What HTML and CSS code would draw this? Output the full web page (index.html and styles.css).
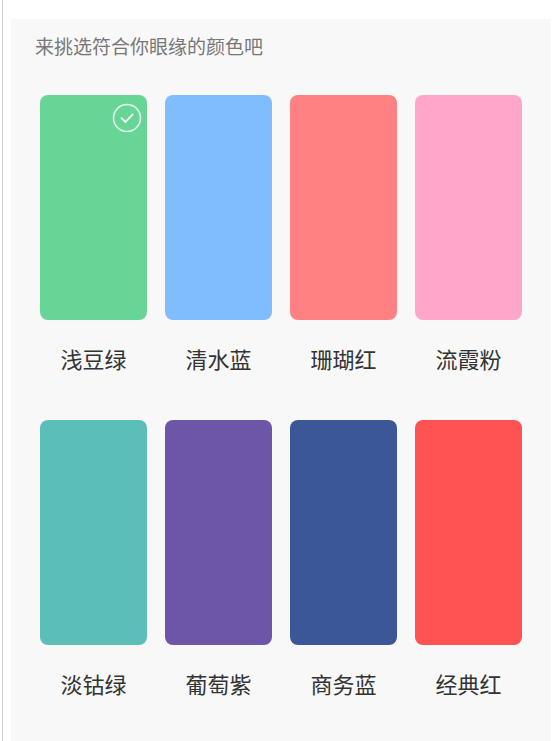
FILE: index.html
```html
<!DOCTYPE html>
<html lang="zh-CN">
<head>
  <meta charset="UTF-8" />
  <meta name="viewport" content="width=device-width, initial-scale=1.0">
  <title>主题色</title>
  <link rel="stylesheet" href="styles.css">
</head>

<body>
  <div class="frame">
    <div class="panel">
      <p class="title">来挑选符合你眼缘的颜色吧</p>

      <div class="swatches">
        <div class="swatch">
          <div class="color green">
            <svg class="check" viewBox="0 0 30 30" width="30" height="30">
              <circle cx="15" cy="15" r="13.5" fill="none" stroke="rgba(255,255,255,0.85)" stroke-width="1.6"/>
              <path d="M9.5 15.2 L13.4 19 L20.8 11.4" fill="none" stroke="rgba(255,255,255,0.9)" stroke-width="1.8" stroke-linecap="round" stroke-linejoin="round"/>
            </svg>
          </div>
          <div class="name">浅豆绿</div>
        </div>
        <div class="swatch">
          <div class="color blue"></div>
          <div class="name">清水蓝</div>
        </div>
        <div class="swatch">
          <div class="color coral"></div>
          <div class="name">珊瑚红</div>
        </div>
        <div class="swatch">
          <div class="color pink"></div>
          <div class="name">流霞粉</div>
        </div>
        <div class="swatch">
          <div class="color teal"></div>
          <div class="name">淡钴绿</div>
        </div>
        <div class="swatch">
          <div class="color purple"></div>
          <div class="name">葡萄紫</div>
        </div>
        <div class="swatch">
          <div class="color navy"></div>
          <div class="name">商务蓝</div>
        </div>
        <div class="swatch">
          <div class="color red"></div>
          <div class="name">经典红</div>
        </div>
      </div>
    </div>
  </div>
</body>
</html>
```

FILE: styles.css
```css
body {
  background-color: white;
  margin: 0;
  padding: 0;
  font-family: "Noto Sans CJK SC", "Noto Sans", sans-serif;
}

.frame {
  margin-left: 2px;
  border-left: 1px solid #d2d2d2;
  padding: 19px 0 0 8px;
  min-height: 722px;
}

.panel {
  width: 540px;
  min-height: 722px;
  background-color: #f8f8f9;
  padding-top: 14px;
  box-sizing: border-box;
}

.title {
  margin: 0 0 37px 24px;
  font-size: 19px;
  line-height: 25px;
  color: #777;
}

.swatches {
  display: grid;
  grid-template-columns: repeat(4, 107px);
  column-gap: 18px;
  row-gap: 47px;
  padding-left: 29px;
}

.swatch {
  display: flex;
  flex-direction: column;
  align-items: center;
}

.color {
  position: relative;
  width: 107px;
  height: 225px;
  border-radius: 8px;
}

.check {
  position: absolute;
  top: 8px;
  right: 5px;
}

.name {
  margin-top: 23px;
  font-size: 22px;
  line-height: 30px;
  color: #333;
}

.green { background-color: #67d596; }
.blue { background-color: #80bdfe; }
.coral { background-color: #ff8181; }
.pink { background-color: #ffa6ca; }
.teal { background-color: #5bbfb7; }
.purple { background-color: #6d55a8; }
.navy { background-color: #3b5798; }
.red { background-color: #ff5252; }
```
